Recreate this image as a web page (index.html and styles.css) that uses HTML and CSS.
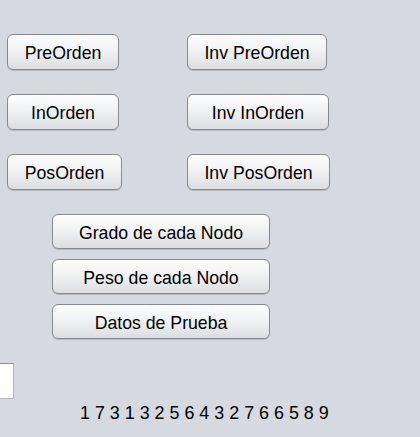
FILE: index.html
```html
<!DOCTYPE html>
<html lang="es">
<head>
    <meta charset="UTF-8" />
    <title>Recorridos del Árbol</title>
    <link rel="stylesheet" href="styles.css">
</head>
<body>
    <div class="panel">
        <!-- recorridos -->
        <div class="traversals">
            <button class="btn w112">PreOrden</button>
            <button class="btn w140">Inv PreOrden</button>
            <button class="btn w112">InOrden</button>
            <button class="btn w142">Inv InOrden</button>
            <button class="btn w115">PosOrden</button>
            <button class="btn w143">Inv PosOrden</button>
        </div>

        <!-- datos del arbol -->
        <div class="actions">
            <button class="btn w218">Grado de cada Nodo</button>
            <button class="btn w218">Peso de cada Nodo</button>
            <button class="btn w218">Datos de Prueba</button>
        </div>

        <input class="field" type="text">

        <div class="result">1 7 3 1 3 2 5 6 4 3 2 7 6 6 5 8 9</div>
    </div>
</body>
</html>
```

FILE: styles.css
```css
/* pagina */
body {
    margin: 0;
    padding: 0;
    background: #d6d9e0;
    font-family: "Liberation Sans", Arial, sans-serif;
    color: #000;
    overflow: hidden;
}

.panel {
    padding: 34px 0 0 7px;
}

/* botones */
.btn {
    display: block;
    height: 36px;
    padding: 3px 0 0;
    font-family: inherit;
    font-size: 17.7px;
    color: #000;
    border: 1px solid #86898f;
    border-radius: 6px;
    background: linear-gradient(#fdfdfe, #f1f2f4 45%, #dcdde2);
    box-shadow: 0 1px 0 rgba(0, 0, 0, 0.15);
    cursor: pointer;
}

.w112 { width: 112px; }
.w115 { width: 115px; }
.w140 { width: 140px; }
.w142 { width: 142px; }
.w143 { width: 143px; }
.w218 { width: 218px; height: 35px; }

.traversals {
    display: grid;
    grid-template-columns: 180px auto;
    row-gap: 24px;
}

.actions {
    display: flex;
    flex-direction: column;
    gap: 10px;
    margin: 24px 0 0 45px;
}

/* campo de texto (cortado por el borde) */
.field {
    display: block;
    width: 100px;
    height: 36px;
    box-sizing: border-box;
    margin: 24px 0 0 -93px;
    border: 1px solid #b5b8bd;
    border-top-color: #8f9297;
    background: #fff;
}

.result {
    margin: 4px 0 0 73px;
    font-size: 17.9px;
    line-height: 20px;
    color: #000;
}
```
